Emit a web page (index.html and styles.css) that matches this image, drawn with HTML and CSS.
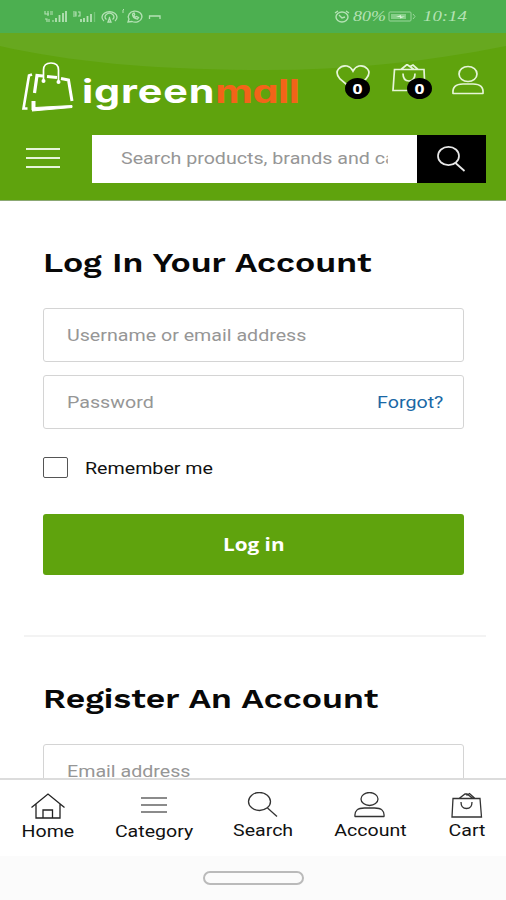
FILE: index.html
```html
<!DOCTYPE html>
<html lang="en">
<head>
    <meta charset="UTF-8">
    <meta name="viewport" content="width=device-width, initial-scale=1.0">
    <title>igreenmall - My Account</title>
    <link rel="stylesheet" href="styles.css">
</head>
<body>
    <div class="status-bar">
        <svg class="status-icons" width="125" height="24" viewBox="40 5 125 24" fill="none" stroke="#b5e2b5" stroke-width="1.3">
            <path d="M45 11v3h4M48 11v5M50 12h3M50 14h3M45 19h2v3M49 19v3M53 22v-2" stroke-width="1.100"/>
            <path d="M56 22v-4M59.500 22v-7M63 22v-9M66 22v-11" stroke-width="1.800"/>
            <path d="M73 12h3v4h-3M73 14h3M78 12h2v4h-2" stroke-width="1.100"/>
            <path d="M81 22v-3M84 22v-4M87.500 22v-6M91 22v-8" stroke-width="1.800"/>
            <path d="M94.500 22v-10" stroke="#73c476"/>
            <path d="M104 21a7.500 5.500 0 1 1 11 0M106.500 19.500a4.500 3.500 0 1 1 6 0M109.500 17v2M108 22l1.500-4 1.500 4z"/>
            <path d="M124 9l-1 1v3" stroke-width="1"/>
            <path d="M128 22l1-3a6.800 5.500 0 1 1 3 2.500zM132.500 14q0 4.500 5 5l1-1.500-2-1-1 .7q-1-.7-1.500-1.700l.7-1-.7-1.500z"/>
            <path d="M149.500 19v-3h10.500v3"/>
        </svg>
        <div class="status-right">
            <svg width="16" height="14" viewBox="0 0 16 14" fill="none" stroke="#b5e2b5" stroke-width="1.4">
                <ellipse cx="8" cy="7" rx="6" ry="5"/>
                <path d="M1 3l3-2M15 3l-3-2M5 5l3 3 3-1"/>
            </svg>
            <span class="percent">80%</span>
            <svg width="28" height="12" viewBox="0 0 28 12" fill="none" stroke="#9ad79c">
                <rect x="1" y="1" width="22" height="9" rx="1"/>
                <rect x="3" y="3" width="15" height="5" fill="#86cf88" stroke="none"/>
                <path d="M8 6l5-2v1.500h4l-5 2V6z" fill="#d8f4d8" stroke="none"/>
                <path d="M25 3l2 2.500-2 2.500"/>
            </svg>
            <span class="time">10:14</span>
        </div>
    </div>

    <header class="header">
        <svg class="header-wave" viewBox="0 0 506 48" preserveAspectRatio="none">
            <path d="M0 0H506V13C420 30 340 38 250 37C150 36 70 29 0 13z" fill="#67a81f"/>
        </svg>
        <div class="header-top">
            <a class="logo" href="#">
                <svg width="54" height="54" viewBox="0 0 54 54" fill="none" stroke="#fff">
                    <path d="M22.500 20V10q0-7 7.500-7t7.500 7v11" stroke-width="1.700"/>
                    <path d="M11 14.500L8 15.500 2.500 48.500h4" stroke-width="2.600"/>
                    <path d="M13.500 33L16 15.500l6 .5M26 16.500l10 1" stroke-width="3.200"/>
                    <path d="M40 18.500l7.500 1.500 3.500 21" stroke-width="3"/>
                    <path d="M12.500 41v9" stroke-width="4"/>
                    <path d="M11 51L14 47.500 51 45.500V47.500z" fill="#fff" stroke-width="1"/>
                    <circle cx="22.500" cy="21" r="2" fill="#fff" stroke="none"/>
                    <circle cx="37.500" cy="22" r="2" fill="#fff" stroke="none"/>
                </svg>
                <span class="logo-text">igreen<b>mall</b></span>
            </a>
            <div class="header-actions">
                <a class="action wishlist" href="#">
                    <svg width="34" height="32" viewBox="0 0 34 32" fill="none" stroke="#e6f5d8" stroke-width="1.700">
                        <path d="M17 26L4 15Q-1 9 2.500 5Q6 1 11 2Q15 3 17 7Q19 3 23 2Q28 1 31.500 5Q35 9 30 15z"/>
                    </svg>
                    <span class="badge"><span>0</span></span>
                </a>
                <a class="action cart" href="#">
                    <svg width="34" height="32" viewBox="0 0 34 32" fill="none" stroke="#e6f5d8" stroke-width="1.700">
                        <path d="M2.500 5.500H32L33 26.500H1zM9 5.500l6-5 7 5M18 2.500l3-1.500 5 4.500M11 9.500q0 7.500 6 7.500t6-7.500"/>
                    </svg>
                    <span class="badge"><span>0</span></span>
                </a>
                <a class="action user" href="#">
                    <svg width="34" height="32" viewBox="0 0 34 32" fill="none" stroke="#e6f5d8" stroke-width="1.700">
                        <ellipse cx="17" cy="10" rx="9" ry="7.500"/>
                        <path d="M2 29.500q-1-9.500 10-9.500h10q11 0 10 9.500z" stroke-linejoin="round"/>
                    </svg>
                </a>
            </div>
        </div>
        <div class="header-search">
            <div class="menu-toggle"><i></i><i></i><i></i></div>
            <form class="search-form">
                <div class="search-field">
                    <input class="text-input" type="text" placeholder="Search products, brands and categories">
                </div>
                <button class="search-button" type="button" aria-label="Search">
                    <svg width="30" height="28" viewBox="0 0 30 28" fill="none" stroke="#e8e8e8" stroke-width="1.700">
                        <ellipse cx="11.500" cy="11" rx="10.500" ry="9.200"/>
                        <path d="M18.500 18l9 8"/>
                    </svg>
                </button>
            </form>
        </div>
    </header>

    <main class="content">
        <form class="account-form">
            <h2><span>Log In Your Account</span></h2>
            <div class="form-group">
                <input class="text-input" type="text" placeholder="Username or email address">
            </div>
            <div class="form-group">
                <input class="text-input" type="password" placeholder="Password">
                <a class="forgot" href="#">Forgot?</a>
            </div>
            <label class="remember">
                <input type="checkbox">
                <span>Remember me</span>
            </label>
            <button class="login-button" type="button"><span>Log in</span></button>
        </form>
        <hr>
        <form class="account-form">
            <h2><span>Register An Account</span></h2>
            <div class="form-group">
                <input class="text-input" type="email" placeholder="Email address">
            </div>
        </form>
    </main>

    <nav class="bottom-nav">
        <a class="nav-home" href="#">
            <svg width="36" height="28" viewBox="0 0 36 28" fill="none" stroke="#222" stroke-width="1.300">
                <path d="M1.500 14.500L18 1l16.500 13.500M6 11v14h24V11M13 25v-8h9.500v8"/>
            </svg>
            <span>Home</span>
        </a>
        <a class="nav-category" href="#">
            <svg width="28" height="28" viewBox="0 0 28 28" fill="none" stroke="#666" stroke-width="1.700">
                <path d="M1 5h26M1 12h26M1 19h26"/>
            </svg>
            <span>Category</span>
        </a>
        <a class="nav-search" href="#">
            <svg width="32" height="28" viewBox="0 0 32 28" fill="none" stroke="#333" stroke-width="1.300">
                <ellipse cx="12.500" cy="9.500" rx="11" ry="9"/>
                <path d="M20.500 16l9.500 8.500"/>
            </svg>
            <span>Search</span>
        </a>
        <a class="nav-account" href="#">
            <svg width="32" height="28" viewBox="0 0 32 28" fill="none" stroke="#333" stroke-width="1.300">
                <ellipse cx="15.500" cy="7" rx="8.500" ry="6.500"/>
                <path d="M1 24.500q-1-8.500 9.500-8.500h10q10.500 0 9.500 8.500z" stroke-linejoin="round"/>
            </svg>
            <span>Account</span>
        </a>
        <a class="nav-cart" href="#">
            <svg width="32" height="28" viewBox="0 0 32 28" fill="none" stroke="#333" stroke-width="1.300">
                <path d="M2 6.500h27L30.500 25H1zM8 6.500l6-4.500h2l6 4.500M15.500 3.500l3-2 5.500 5M10 10q0 6.500 5.500 6.500t5.500-6.500"/>
            </svg>
            <span>Cart</span>
        </a>
    </nav>
    <div class="gesture-bar"><i></i></div>
</body>
</html>
```

FILE: styles.css
```css
* {
    box-sizing: border-box;
}
body {
    margin: 0;
    height: 900px;
    overflow: hidden;
    display: flex;
    flex-direction: column;
    background: #fff;
    color: #111;
    font-family: Roboto, sans-serif;
}
a {
    color: inherit;
    text-decoration: none;
}
svg {
    display: block;
    flex: none;
}

/* status bar */
.status-bar {
    height: 33px;
    flex: none;
    display: flex;
    justify-content: space-between;
    padding: 5px 37px 0 40px;
    background: #4caf50;
}
.status-right {
    display: flex;
    align-items: center;
    height: 24px;
    color: #b5e2b5;
    font: italic 14px "Liberation Serif", serif;
}
.percent,
.time {
    display: block;
    transform: scaleX(1.28);
    transform-origin: left;
}
.percent {
    width: 35px;
    margin-left: 3px;
}
.time {
    width: 46px;
    margin-left: 7px;
    transform: scaleX(1.34);
}

/* header */
.header {
    position: relative;
    height: 168px;
    flex: none;
    background: #5fa30d;
    border-bottom: 1px solid #8ba873;
}
.header-wave {
    position: absolute;
    top: 0;
    left: 0;
    width: 100%;
    height: 48px;
}
.header-top {
    position: relative;
    height: 102px;
    display: flex;
    justify-content: space-between;
    padding: 27px 21px 0;
}
.logo {
    display: flex;
}
.logo-text {
    height: 54px;
    margin-left: 7px;
    padding-top: 11px;
    color: #fff;
    font: 700 32px/42px Inter, sans-serif;
    font-feature-settings: "cv11";
    letter-spacing: 0.7px;
    transform: scaleX(1.29);
    transform-origin: left;
}
.logo-text b {
    font-weight: 700;
    color: #f26419;
    letter-spacing: -0.4px;
}
.header-actions {
    display: flex;
    padding-top: 4px;
}
.action {
    position: relative;
    width: 34px;
}
.cart {
    margin-left: 22px;
}
.user {
    margin-left: 25px;
}
.badge {
    position: absolute;
    left: 9px;
    top: 14px;
    width: 25px;
    height: 21px;
    border-radius: 50%;
    background: #000;
    color: #fff;
    font: bold 14px/21px "Open Sans", sans-serif;
    text-align: center;
}
.cart .badge {
    left: 15px;
}
.badge span {
    display: block;
    transform: scaleX(1.25);
}
.header-search {
    display: flex;
    align-items: center;
    padding: 0 20px 0 26px;
}
.menu-toggle {
    width: 34px;
    margin: 0 32px 3px 0;
    display: grid;
    gap: 7px;
}
.menu-toggle i {
    height: 2px;
    background: #e6f5d8;
}
.search-form {
    flex: 1;
    height: 48px;
    display: flex;
}
.search-field {
    flex: 1;
    display: flex;
    align-items: center;
    padding: 0 0 2px 29px;
    background: #fff;
}
.search-field .text-input {
    width: 231px;
}
.search-button {
    width: 69px;
    border: 0;
    padding: 0;
    display: grid;
    place-items: center;
    background: #000;
}

/* inputs */
.text-input {
    width: 222px;
    border: 0;
    padding: 0;
    outline: none;
    background: transparent;
    font: 17px Roboto, sans-serif;
    transform: scaleX(1.155);
    transform-origin: left;
}
.text-input::placeholder {
    color: #969696;
}

/* account forms */
.content {
    flex: 1;
    min-height: 0;
    overflow: hidden;
}
.account-form {
    padding: 44px 42px 0 43px;
}
.account-form h2 {
    margin: 0 0 26px;
    font: 600 27px/37px "Work Sans", "Liberation Sans", sans-serif;
    color: #080808;
    white-space: nowrap;
}
.account-form h2 span {
    display: inline-block;
    transform: scaleX(1.252);
    transform-origin: left;
}
.form-group {
    height: 54px;
    margin-bottom: 13px;
    padding: 0 20px 1px 23px;
    border: 1px solid #d4d4d4;
    border-radius: 3px;
    display: flex;
    align-items: center;
    justify-content: space-between;
}
.forgot {
    color: #1a68a5;
    font-size: 17px;
    transform: scaleX(1.155);
    transform-origin: right;
}
.remember {
    display: flex;
    align-items: center;
    margin-top: 28px;
    height: 21px;
    font-size: 17px;
}
.remember input {
    appearance: none;
    width: 25px;
    height: 21px;
    margin: 0 17px 0 0;
    border: 1px solid #555;
    border-radius: 2px;
}
.remember span {
    transform: scaleX(1.155);
    transform-origin: left;
}
.login-button {
    width: 100%;
    height: 61px;
    margin-top: 36px;
    padding-bottom: 3px;
    border: 0;
    border-radius: 3px;
    background: #5fa30d;
    color: #fff;
    font: bold 18px "Open Sans", sans-serif;
}
.login-button span {
    display: inline-block;
    transform: scaleX(1.15);
}
hr {
    height: 2px;
    margin: 60px 20px 0 24px;
    border: 0;
    background: #f3f3f3;
}

/* bottom navigation */
.bottom-nav {
    height: 78px;
    flex: none;
    display: flex;
    justify-content: space-between;
    padding: 12px 23px 0 25px;
    border-top: 2px solid #dcdcdc;
    background: #fff;
    font-size: 17px;
}
.bottom-nav a {
    display: flex;
    flex-direction: column;
    align-items: center;
}
.bottom-nav span {
    line-height: 20px;
    transform: scaleX(1.15);
}
.nav-home,
.nav-category {
    padding-top: 1px;
}
.gesture-bar {
    height: 44px;
    flex: none;
    display: grid;
    place-items: center;
    background: #fbfbfb;
}
.gesture-bar i {
    width: 101px;
    height: 14px;
    border: 2px solid #bababa;
    border-radius: 7px;
}
```
